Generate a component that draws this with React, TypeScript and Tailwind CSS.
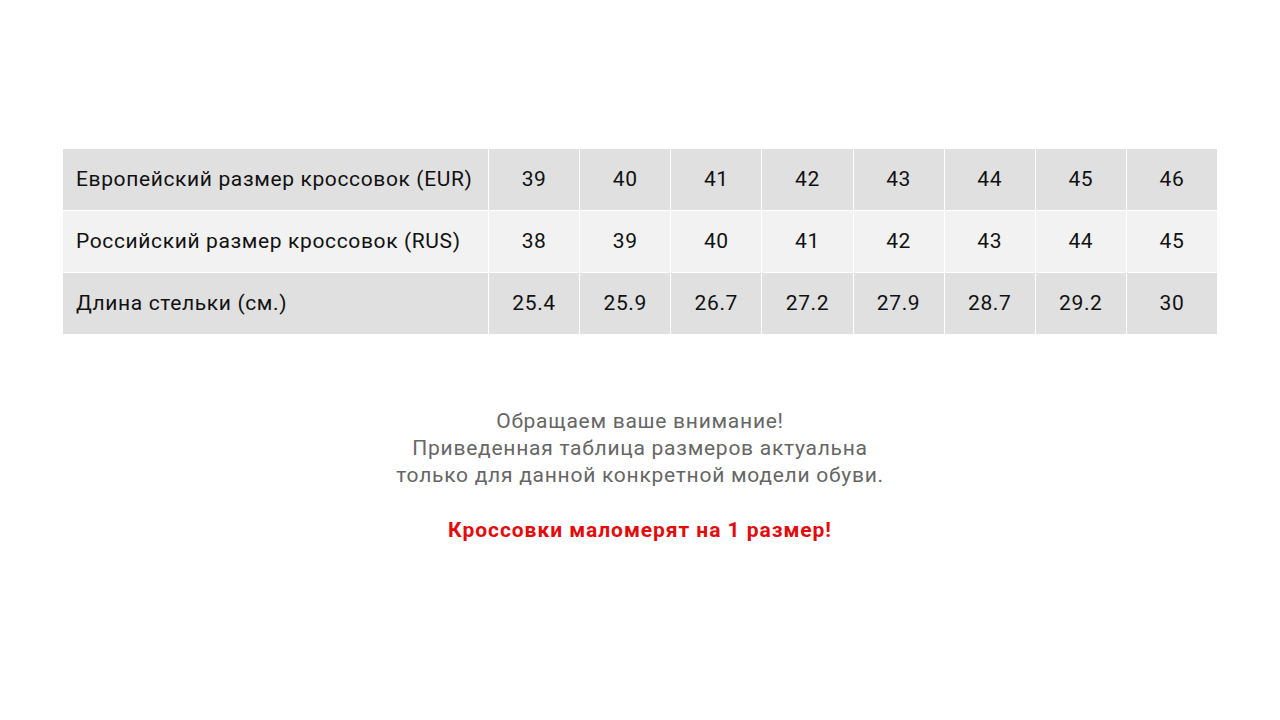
const ROWS = [
  { label: "Европейский размер кроссовок (EUR)", values: ["39", "40", "41", "42", "43", "44", "45", "46"], bg: "bg-[#e0e0e0]" },
  { label: "Российский размер кроссовок (RUS)", values: ["38", "39", "40", "41", "42", "43", "44", "45"], bg: "bg-[#f2f2f2]" },
  { label: "Длина стельки (см.)", values: ["25.4", "25.9", "26.7", "27.2", "27.9", "28.7", "29.2", "30"], bg: "bg-[#e0e0e0]" },
];

export default function App() {
  return (
    <main className="min-h-screen w-full bg-white font-['Roboto','Liberation_Sans',sans-serif]">
      <div className="px-[62px] pt-[148px]">
        <table className="w-[1156px] border-collapse table-fixed">
          <colgroup>
            <col className="w-[426px]" />
            {ROWS[0].values.map((_, i) => (
              <col key={i} />
            ))}
          </colgroup>
          <tbody>
            {ROWS.map((r) => (
              <tr key={r.label} className={`${r.bg} h-[62px]`}>
                <td className="border border-white pl-[13px] text-[21px] tracking-[0.03em] text-[#111]">{r.label}</td>
                {r.values.map((v, i) => (
                  <td key={i} className="border border-white text-center text-[21px] tracking-[0.03em] text-[#111]">
                    {v}
                  </td>
                ))}
              </tr>
            ))}
          </tbody>
        </table>
      </div>

      <div className="mt-[73px] flex flex-col items-center text-center text-[21px] leading-[27px] tracking-[0.035em] text-[#666]">
        <p>Обращаем ваше внимание!</p>
        <p>Приведенная таблица размеров актуальна</p>
        <p>только для данной конкретной модели обуви.</p>
        <p className="mt-[28px] font-bold tracking-[0.045em] text-[#e30b0b]">Кроссовки маломерят на 1 размер!</p>
      </div>
    </main>
  );
}
